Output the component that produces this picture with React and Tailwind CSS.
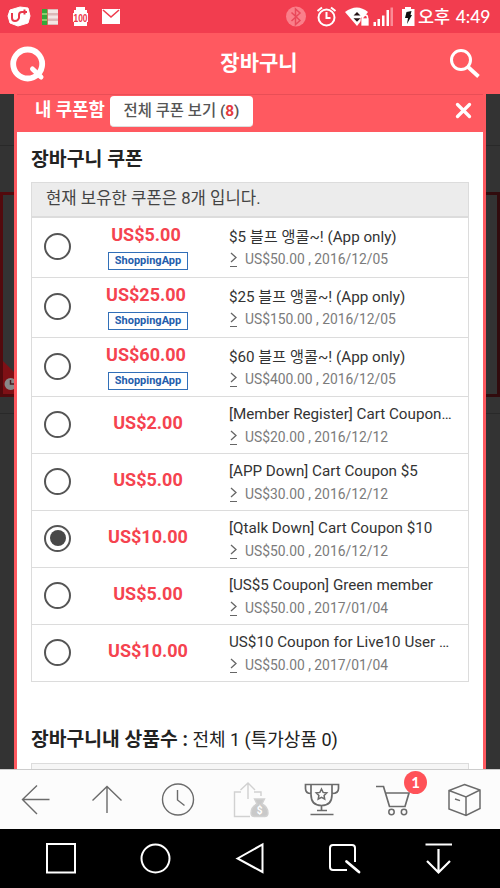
const coupons = [
  { price: "US$5.00", app: true, title: "$5 블프 앵콜~! (App only)", min: "US$50.00", date: "2016/12/05", height: "h-[60px]" },
  { price: "US$25.00", app: true, title: "$25 블프 앵콜~! (App only)", min: "US$150.00", date: "2016/12/05", height: "h-[60px]" },
  { price: "US$60.00", app: true, title: "$60 블프 앵콜~! (App only)", min: "US$400.00", date: "2016/12/05", height: "h-[59px]" },
  { price: "US$2.00", title: "[Member Register] Cart Coupon…", min: "US$20.00", date: "2016/12/12", height: "h-[57px]" },
  { price: "US$5.00", title: "[APP Down] Cart Coupon $5", min: "US$30.00", date: "2016/12/12", height: "h-[57px]" },
  { price: "US$10.00", title: "[Qtalk Down] Cart Coupon $10", min: "US$50.00", date: "2016/12/12", height: "h-[57px]", selected: true },
  { price: "US$5.00", title: "[US$5 Coupon] Green member", min: "US$50.00", date: "2017/01/04", height: "h-[57px]" },
  { price: "US$10.00", title: "US$10 Coupon for Live10 User …", min: "US$50.00", date: "2017/01/04", height: "h-[57px]" },
];

function StatusBar() {
  return (
    <div className="flex h-[33px] shrink-0 items-center bg-[#f23d4f] text-white">
      <svg className="h-[33px] w-[400px] shrink-0" viewBox="0 0 400 33">
        {/* carrier */}
        <path d="M10 10 L20 7 L28 8 L30 16 L28 23 L18 26 L10 23 L8 16Z" fill="#fff" stroke="#fff" strokeLinejoin="round" />
        <path d="M12 13v5q0 3 3 3t4-3v-3q0-3 3-3h5M24.500 9.500v5" fill="none" stroke="#e8384b" strokeWidth="2" />
        {/* list */}
        <path d="M48 9h10v16H48z" fill="#dcb9b8" />
        <path d="M48 10h10v3H48zM48 15.500h10v3H48zM48 21h10v3H48z" fill="#f3e6e3" />
        <path d="M42 9h5.500v16H42z" fill="#8ccb6d" />
        <path d="M42 9h5v4h-5zM42 15h5v4h-5zM42 21h5v4h-5z" fill="#35a83a" />
        {/* battery */}
        <path d="M76 7h9v3h2v3h1v9h-1v4H74v-4h-1v-9h1v-3h2z" fill="#fff" />
        <text x="80.5" y="21.8" textAnchor="middle" fontSize="10" fontWeight="700" textLength="14" lengthAdjust="spacingAndGlyphs" fill="#ed394b" className="font-['Liberation_Sans',sans-serif]">100</text>
        {/* mail */}
        <path d="M102 9h18v15h-18z" fill="#fff" />
        <path d="m103 10 8 7 8-7" fill="none" stroke="#ef3c4e" strokeWidth="1.6" />
        {/* bluetooth */}
        <circle cx="296" cy="16.5" r="10" fill="#fa7f8a" />
        <path d="m291.500 12.500 8.500 8-4.500 4V9l4.500 4-8.500 8" fill="none" stroke="#e9485a" strokeWidth="1.500" />
        {/* alarm */}
        <g fill="none" stroke="#fff" strokeWidth="2">
          <circle cx="326.500" cy="17.500" r="8" />
          <path d="M326.500 12v6h4M317.500 11l4.500-3.500M335.500 11 331 7.500" />
        </g>
        {/* wifi */}
        <path d="M345 12q12-9 23 0L357 26z" fill="#fff" />
        <path d="m353.500 15.500 3.500-3.500 3.500 3.500zM353.500 18.200h7l-3.500 3.600z" fill="#251315" />
        <path d="M361 18h8v8h-8z" fill="#fff" stroke="#ef3c4e" strokeWidth=".7" />
        <path d="M362.500 19v-1.500a2.500 2.500 0 0 1 5 0V19" fill="none" stroke="#fff" strokeWidth="1.500" />
        {/* signal */}
        <path d="M373.500 22h2.500v4h-2.500zM377.500 19h2.500v7h-2.500zM382 15.500h2.500V26H382zM386.500 10h2.500v16h-2.500z" fill="#fff" />
        <path d="M390.500 7.500h2.500V26h-2.500z" fill="#fa8b96" />
      </svg>
      <svg className="h-[33px] w-4 shrink-0" viewBox="0 0 16 33">
        <path d="M5 7h6v2h3.500v17H2V9h3z" fill="#fff" />
        <path d="m6.500 12 5-1-1 4h1.500l-5 9 1-6H5z" fill="#111" />
      </svg>
      <span className="ml-[2px] whitespace-nowrap font-[Lato,'Noto_Sans_CJK_KR',sans-serif] text-[17.5px] leading-[33px] font-medium">
        오후 <span className="ml-px">4:49</span>
      </span>
    </div>
  );
}

function Header() {
  return (
    <header className="flex h-[61px] shrink-0 items-center justify-between bg-[#ff5960] pr-[19px] pl-[9px] text-white">
      <svg className="size-[38px]" viewBox="0 0 38 38" fill="none" stroke="#fff">
        <circle cx="18.700" cy="19" r="14.500" strokeWidth="5.800" />
        <path d="m23.500 24 8.500 8" strokeWidth="5" strokeLinecap="round" />
      </svg>
      <h1 className="pl-[22px] text-[21px] font-bold">장바구니</h1>
      <svg className="size-[32px]" viewBox="0 0 32 32" fill="none" stroke="#fff">
        <circle cx="12" cy="12" r="9.500" strokeWidth="3" />
        <path d="m18.500 18.500 11 10" strokeWidth="3.800" />
      </svg>
    </header>
  );
}

// Strip of the dimmed page behind the dialog
function Backdrop({ side }) {
  const left = side === "left";
  return (
    <div className="flex w-[14px] shrink-0 flex-col overflow-hidden bg-[#333]">
      <div className="h-[52px] border-b border-[#292929]" />
      <div className="h-[46px]" />
      <div className={left ? "flex h-[205px] items-end border-y-[3px] border-l-[3px] border-[#520a0d]" : "h-[205px] border-y-[3px] border-r-[3px] border-[#310b0d]"}>
        {left && (
          <svg className="h-[34px] w-[11px] shrink-0" viewBox="0 0 11 34">
            <path d="M-1 0 11 12v22H-1z" fill="#7f1015" />
            <circle cx="7.500" cy="24" r="6" fill="#888" />
            <path d="M7.500 20v4h4" fill="none" stroke="#4b1d20" strokeWidth="1.500" />
          </svg>
        )}
      </div>
      <div className="h-[17px] border-b border-[#292929]" />
    </div>
  );
}

function CouponRow({ coupon }) {
  return (
    <li className={`flex shrink-0 border-b border-[#dcdcdc] ${coupon.height}`}>
      <div className="flex w-[62px] items-center pb-[2px] pl-[12px]">
        <span className="flex size-[27px] items-center justify-center rounded-full border-2 border-[#555]">
          {coupon.selected && <span className="size-[16px] rounded-full bg-[#484848]" />}
        </span>
      </div>
      <div className={coupon.app ? "flex w-[108px] flex-col items-center pt-[6px]" : "flex w-[108px] flex-col items-center pt-[15px]"}>
        <strong className={coupon.app ? "-ml-[4px] text-[18px] leading-[22px] font-bold text-[#f5434f]" : "text-[18px] leading-[22px] font-bold text-[#f5434f]"}>{coupon.price}</strong>
        {coupon.app && (
          <span className="mt-[6px] flex h-[18px] w-[80px] items-center justify-center border-[1.5px] border-[#316fb8] text-[11px] font-bold text-[#235dac]">ShoppingApp</span>
        )}
      </div>
      <div className={coupon.app ? "ml-[27px] pt-[9px]" : "ml-[27px] pt-[7px]"}>
        <div className="h-[20px] text-[15.2px] leading-[20px] whitespace-nowrap text-[#333]">{coupon.title}</div>
        <div className={coupon.app ? "mt-[2px] flex h-[20px] items-center text-[13.85px] leading-[20px] whitespace-nowrap text-[#7b7b7b]" : "mt-[3px] flex h-[20px] items-center text-[13.85px] leading-[20px] whitespace-nowrap text-[#7b7b7b]"}>
          <svg className="mr-[8px] h-[18px] w-[8px]" viewBox="0 0 8 18" fill="none" stroke="#666">
            <path d="m2 3 5 4.500L2 12" strokeWidth="1.300" />
            <path d="M1 16.500h7" />
          </svg>
          {coupon.min} , {coupon.date}
        </div>
      </div>
    </li>
  );
}

function CouponDialog() {
  return (
    <section className="flex w-[472px] shrink-0 flex-col overflow-hidden border-x-[3px] border-[#ff5960] bg-white">
      <div className="flex h-[38px] shrink-0 border-t border-[#e94e56] bg-[#ff5960] pr-[11px] pl-[18px] text-white">
        <h2 className="w-[75px] text-[17.8px] leading-[29px] font-bold whitespace-nowrap">내 쿠폰함</h2>
        <button className="mt-[1px] h-[31px] w-[143px] rounded-[4px] border-b border-[#ddd] bg-white text-[15.4px] leading-[28px] font-medium whitespace-nowrap text-[#555]">
          전체 쿠폰 보기 (<b className="text-[#e53b3f]">8</b>)
        </button>
        <svg className="mt-[7px] ml-auto size-[17px]" viewBox="0 0 17 17">
          <path d="m2.500 2.500 12 12m0-12-12 12" stroke="#fff" strokeWidth="3.300" strokeLinecap="round" />
        </svg>
      </div>
      <div className="flex flex-col pr-[14px] pl-[14px]">
        <h3 className="h-[50px] pt-[15px] text-[19.4px] leading-[26px] font-bold text-[#222]">장바구니 쿠폰</h3>
        <div className="w-[438px] border border-b-0 border-[#dcdcdc]">
          <p className="h-[35px] border-b-2 border-[#dcdcdc] bg-[#ececec] pl-[14px] text-[16.7px] leading-[32px] whitespace-nowrap text-[#444]">현재 보유한 쿠폰은 8개 입니다.</p>
          <ul>
            {coupons.map((coupon, i) => (
              <CouponRow key={i} coupon={coupon} />
            ))}
          </ul>
        </div>
        <p className="mt-[44px] h-[37px] text-[18px] leading-[28px] whitespace-nowrap text-[#222]">
          <b className="text-[19.3px]">장바구니내 상품수 :</b> 전체 1 (특가상품 0)
        </p>
        <div className="h-[12px] w-[438px] shrink-0 border border-[#dcdcdc] bg-[#f6f6f6]" />
      </div>
    </section>
  );
}

function Toolbar() {
  return (
    <div className="relative h-[60px] shrink-0 border-t border-[#ccc] bg-[#fcfcfc]">
      <svg className="h-[60px] w-[500px]" viewBox="0 769 500 60" fill="none" stroke="#6b6b6b" strokeWidth="1.400">
        <path d="M49.500 798.500H22.500M37 784.500l-14.500 14 14.500 14.500" />
        <path d="M107 812v-26.500M92.500 799.500l14.500-14 14.500 14" />
        <circle cx="178" cy="798.500" r="15.500" />
        <path d="M177.500 789v10l7 5.500" />
        <g stroke="#d1d1d1">
          <path d="M241 791h-6.500v24.500H250M254 791h7v4M248 798v-15.500M240.500 789l7.500-7 7 7" />
          <path d="M254.500 798h10l-2.500 5q6 3 6 9 0 3.500-3.500 3.500h-10q-3.500 0-3.500-3.500 0-6 6-9z" fill="#c9c9c9" />
        </g>
        <text x="259.500" y="812.500" textAnchor="middle" fontSize="10" fontWeight="700" fill="#fff" stroke="none">$</text>
        <path d="M311 783.500h21v10q0 11-10.500 11T311 793.500zM311 783.500h-5.500v4q0 5 5.500 5M332 783.500h6.500v4q0 5-6.500 5M321.500 804.500v5M317 809.500h10M310.500 813.500h23" strokeWidth="1.700" />
        <path d="m321.500 788 1.600 3.400 3.700.5-2.700 2.600.6 3.700-3.200-1.800-3.300 1.800.7-3.700-2.700-2.600 3.700-.5z" strokeWidth="1.500" />
        <path d="M376 785.500h7.500l6 20h15.500l4-13.500h-23" strokeWidth="1.700" />
        <circle cx="391.500" cy="811" r="2.700" strokeWidth="1.500" />
        <circle cx="404" cy="811" r="2.700" strokeWidth="1.500" />
        <path d="M464.500 783.500 480 789v18.500l-14 7-17-6.500v-18.500zM449 789.500l17 6.500 14-7M466 796v18.500M455 798l5 1.600" strokeWidth="1.500" />
      </svg>
      <span className="absolute top-px left-[404px] flex size-[23px] items-center justify-center rounded-full bg-[#ff5258] font-[Lato,sans-serif] text-[15px] font-bold text-white">1</span>
    </div>
  );
}

function NavBar() {
  return (
    <div className="h-[59px] shrink-0 bg-black">
      <svg className="h-[59px] w-[500px]" viewBox="0 829 500 59" fill="none" stroke="#fff" strokeWidth="2">
        <path d="M47 844h28v28.500H47z" />
        <circle cx="155.500" cy="858.500" r="14" />
        <path d="m237.500 858.500 25-14V872z" />
        <path d="M347 870h-14q-3 0-3-3v-19q0-3 3-3h19q3 0 3 3v14" />
        <path d="m346.500 861.500 12.500 10.500" strokeWidth="2.800" strokeLinecap="round" />
        <path d="M425.500 844.500H452M438.500 849v22M427 861l11.500 11.500L450 861" strokeWidth="2.200" />
      </svg>
    </div>
  );
}

export default function App() {
  return (
    <div className="flex h-[888px] w-[500px] flex-col overflow-hidden font-[Roboto,'Noto_Sans_CJK_KR',sans-serif]">
      <StatusBar />
      <Header />
      <main className="flex h-[675px] shrink-0">
        <Backdrop side="left" />
        <CouponDialog />
        <Backdrop side="right" />
      </main>
      <Toolbar />
      <NavBar />
    </div>
  );
}
